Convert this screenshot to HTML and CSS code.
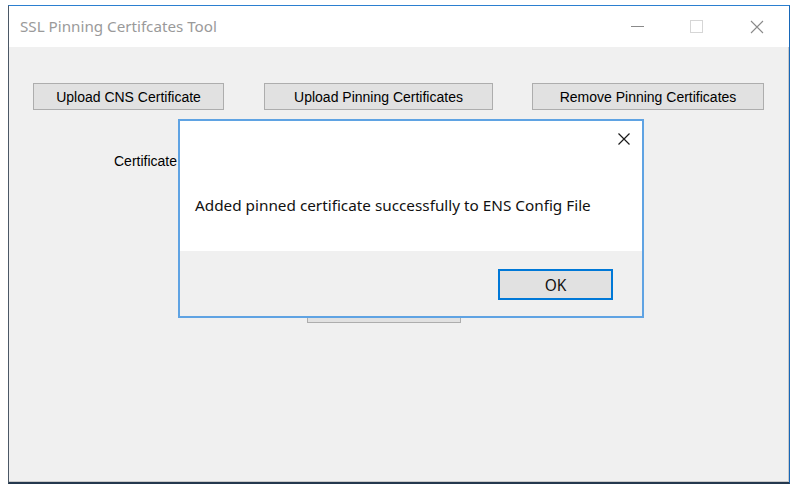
FILE: index.html
```html
<!DOCTYPE html>
<html lang="en">
<head>
  <meta charset="UTF-8">
  <title>SSL Pinning Certifcates Tool</title>
  <link rel="stylesheet" href="styles.css">
</head>
<body>
  <div class="window">
    <div class="titlebar">
      <span class="title">SSL Pinning Certifcates Tool</span>
      <div class="caption-btns">
        <span class="cap cap-min"></span>
        <span class="cap cap-max"></span>
        <svg class="cap cap-close" width="14" height="14" viewBox="0 0 14 14">
          <path d="M1 1 L13 13 M13 1 L1 13" stroke="#8a8a8a" stroke-width="1.1" fill="none"/>
        </svg>
      </div>
    </div>

    <div class="client">
      <div class="buttons">
        <button class="btn btn-cns">Upload CNS Certificate</button>
        <button class="btn btn-upload">Upload Pinning Certificates</button>
        <button class="btn btn-remove">Remove Pinning Certificates</button>
      </div>

      <div class="cert-row">
        <span class="label">Certificate</span>
      </div>

      <div class="submit-row">
        <button class="btn btn-hidden">Submit</button>
      </div>
    </div>

    <!-- message box on top of the form -->
    <div class="dialog">
      <div class="dialog-body">
        <svg class="dialog-close" width="14" height="14" viewBox="0 0 14 14">
          <path d="M1.5 1.5 L12.5 12.5 M12.5 1.5 L1.5 12.5" stroke="#1a1a1a" stroke-width="1.2" fill="none"/>
        </svg>
        <p class="message">Added pinned certificate successfully to ENS Config File</p>
      </div>
      <div class="dialog-footer">
        <button class="btn btn-ok">OK</button>
      </div>
    </div>
  </div>
</body>
</html>
```

FILE: styles.css
```css
* {
  box-sizing: border-box;
  margin: 0;
  padding: 0;
}

body {
  background: #fff;
  font-family: "Liberation Sans", Arial, sans-serif;
}

.window {
  position: relative;
  margin: 5px 0 0 8px;
  width: 782px;
  height: 479px;
  background: #f0f0f0;
  border-top: 1px solid #2b7fd0;
  border-left: 1px solid #4b5866;
  border-right: 1px solid #1767b8;
  border-bottom: 2px solid #24384e;
  box-shadow: inset -1px -1px 0 #c9c9c9;
}

/* title bar */
.titlebar {
  height: 41px;
  background: #fff;
  display: flex;
  align-items: center;
  justify-content: space-between;
  padding-left: 11px;
}

.title {
  font-family: "Noto Sans", "Open Sans", sans-serif;
  font-size: 15.2px;
  color: #9a9a9a;
  margin-top: -1px;
}

.caption-btns {
  display: flex;
  align-items: center;
  height: 100%;
}

.cap {
  display: block;
}

.cap-min {
  width: 13px;
  height: 1px;
  background: #8a8a8a;
  margin-right: 46px;
}

.cap-max {
  width: 13px;
  height: 13px;
  border: 1px solid #d6d6d6;
  margin-right: 47px;
}

.cap-close {
  margin-right: 25px;
}

/* client area */
.client {
  padding: 36px 0 0 24px;
}

.buttons {
  display: flex;
  gap: 40px;
}

.btn {
  font-family: "Liberation Sans", Arial, sans-serif;
  font-size: 14px;
  color: #000;
  background: #e1e1e1;
  border: 1px solid #adadad;
  height: 27px;
  padding: 0;
}

.btn-cns { width: 191px; }
.btn-upload { width: 229px; }
.btn-remove { width: 232px; margin-left: -1px; }

.cert-row {
  margin-top: 42px;
  padding-left: 81px;
  height: 16px;
}

.label {
  font-size: 14px;
  color: #000;
}

.submit-row {
  margin-top: 128px;
  padding-left: 274px;
}

.btn-hidden {
  width: 154px;
  color: #e1e1e1;
}

/* message box */
.dialog {
  position: absolute;
  left: 169px;
  top: 113px;
  width: 466px;
  height: 199px;
  border: 2px solid #5fa3e3;
  background: #f0f0f0;
  display: flex;
  flex-direction: column;
}

.dialog-body {
  position: relative;
  height: 130px;
  background: #fff;
}

.dialog-close {
  position: absolute;
  right: 11px;
  top: 11px;
}

.message {
  font-family: "Noto Sans", "Open Sans", sans-serif;
  font-size: 15.3px;
  color: #111;
  padding: 74px 0 0 15px;
}

.dialog-footer {
  flex: 1;
  padding: 18px 0 0 318px;
}

.btn-ok {
  width: 115px;
  height: 31px;
  border: 2px solid #0078d7;
  font-family: "Noto Sans", "Open Sans", sans-serif;
  font-size: 15.5px;
  color: #111;
}
```
